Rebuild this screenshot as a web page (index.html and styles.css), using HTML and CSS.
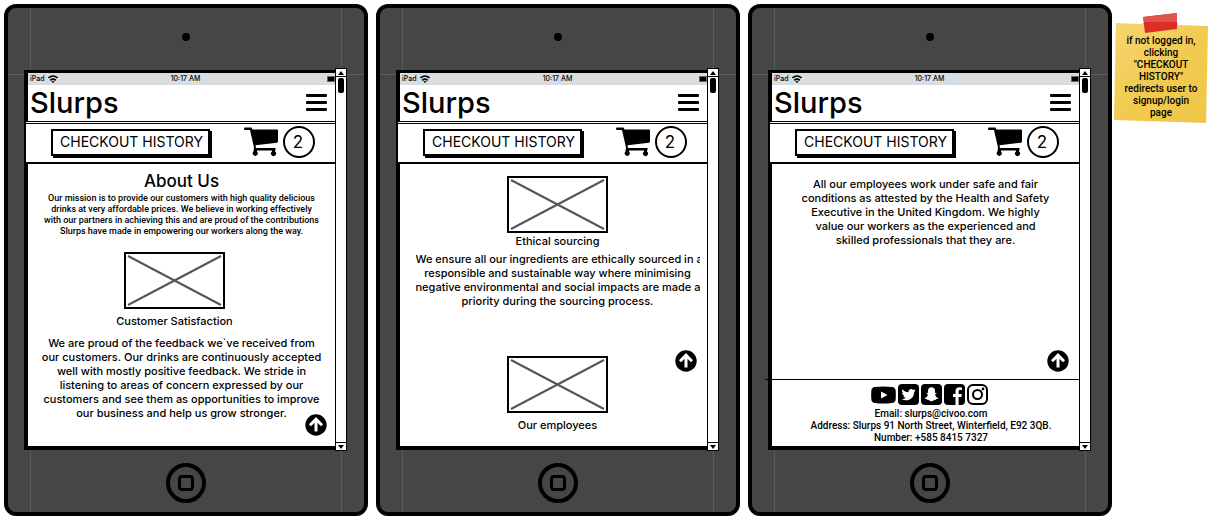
FILE: index.html
```html
<!DOCTYPE html>
<html lang="en">
<head>
<meta charset="utf-8">
<meta name="viewport" content="width=device-width, initial-scale=1">
<title>Slurps – About Us</title>
<link rel="stylesheet" href="styles.css">
</head>
<body>
<svg class="defs" aria-hidden="true">
  <symbol id="wifi" viewBox="0 0 10 8"><g fill="none" stroke="#000" stroke-width="1.6"><path d="M.5 3Q5-1 9.500 3"/><path d="M2.200 5.300Q5 2.900 7.800 5.300"/></g><path d="M3.400 6.600Q5 5.400 6.600 6.600L5 8Z"/></symbol>
  <symbol id="battery" viewBox="0 0 8 6"><rect width="8" height="6" fill="#666"/><rect x="1" y="1" width="6" height="4"/></symbol>
  <symbol id="cart" viewBox="0 0 35 30"><path d="M0 1.500Q0 .5 1 .5H7.500L8.500 2.500H33Q34 2.500 34 3.500V14.500Q34 15.500 33 15.700L11.500 18.300L12 21H31.500V23.500H31V24.500A2.500 2.500 0 1 1 28 24.500V23.500H13V24.500A2.500 2.500 0 1 1 9.500 24.500L10 20.500L6 3H1Q0 3 0 1.500Z"/></symbol>
  <symbol id="up" viewBox="0 0 22 22"><circle cx="11" cy="11" r="10.700"/><path d="M11 17.500V5.500M5 11.200L11 5.200L17 11.200" fill="none" stroke="#fff" stroke-width="3"/></symbol>
  <symbol id="cross" viewBox="0 0 101 57"><rect x="1" y="1" width="99" height="55" fill="#fff" stroke="#000" stroke-width="2"/><path d="M4 4L97 53M97 4L4 53" stroke="#555" stroke-width="2"/></symbol>
  <symbol id="youtube" viewBox="0 0 25 18"><path d="M4 1Q12.500 0 21 1Q24.500 1.300 24.700 5Q25 9 24.700 13Q24.500 16.700 21 17Q12.500 18 4 17Q.5 16.700.3 13Q0 9 .3 5Q.5 1.300 4 1Z"/><path d="M10 5.500L16.500 9L10 12.500Z" fill="#fff"/></symbol>
  <symbol id="twitter" viewBox="0 0 21 21"><rect width="21" height="21" rx="4"/><path d="M17.500 6.300C17 6.600 16.500 6.700 16 6.800C16.600 6.400 17 5.900 17.200 5.200C16.600 5.500 16 5.800 15.300 5.900C13.400 3.900 10 5.300 10.600 8.300C8.100 8.200 5.900 7 4.500 5.200C3.700 6.600 4.100 8.300 5.400 9.200C4.900 9.200 4.500 9 4.100 8.800C4.100 10.200 5.100 11.500 6.500 11.800C6.100 11.900 5.600 11.900 5.200 11.800C5.600 13 6.700 13.800 7.900 13.800C6.700 14.800 5.100 15.200 3.600 15C9 18.400 16.200 15 16.200 8C16.700 7.500 17.200 7 17.500 6.300Z" fill="#fff"/></symbol>
  <symbol id="snapchat" viewBox="0 0 21 21"><rect width="21" height="21" rx="4"/><path d="M10.500 3.300C12.700 3.300 14.100 5 14 7L13.900 8.900C14.400 9.200 15.200 8.500 15.500 9C15.700 9.600 14.500 9.900 14.200 10.400C14.300 12 15.500 13.300 17.300 13.900C17.400 14.700 16 14.800 15.300 15L15 15.900C13 15.400 12.700 17.300 10.500 17.300C8.300 17.300 8 15.400 6 15.900L5.700 15C5 14.800 3.600 14.700 3.700 13.900C5.500 13.300 6.700 12 6.800 10.400C6.500 9.900 5.300 9.600 5.500 9C5.800 8.500 6.600 9.200 7.100 8.900L7 7C6.900 5 8.300 3.300 10.500 3.300Z" fill="#fff"/></symbol>
  <symbol id="facebook" viewBox="0 0 21 21"><rect width="21" height="21" rx="4"/><path d="M11.500 21V13H9V10H11.500V7.500C11.500 4.700 13 3.300 15.500 3.300L18 3.500V6.100H16.300C15 6.100 14.600 6.800 14.600 7.800V10H17.800L17.300 13H14.600V21Z" fill="#fff"/></symbol>
  <symbol id="instagram" viewBox="0 0 21 21"><g fill="none" stroke="#000" stroke-width="2"><rect x="1" y="1" width="19" height="19" rx="5"/><circle cx="10.500" cy="10.500" r="4.500"/></g><circle cx="16" cy="5" r="1.400"/></symbol>
</svg>

<main class="board">
  <section class="tablet">
    <div class="bezel"><span class="camera"></span></div>
    <div class="display">
      <div class="screen">
        <div class="status"><span class="carrier">iPad <svg class="wifi"><use href="#wifi"/></svg></span><span class="time">10:17 AM</span><svg class="battery"><use href="#battery"/></svg></div>
        <header class="header"><h1 class="brand">Slurps</h1><button class="menu" aria-label="Menu"><span></span><span></span><span></span></button></header>
        <div class="toolbar"><button class="history">CHECKOUT HISTORY</button><svg class="cart"><use href="#cart"/></svg><span class="count">2</span></div>
        <div class="content">
          <h2 class="heading">About Us</h2>
          <p class="copy copy-small">Our mission is to provide our customers with high quality delicious<br>drinks at very affordable prices. We believe in working effectively<br>with our partners in achieving this and are proud of the contributions<br>Slurps have made in empowering our workers along the way.</p>
          <figure class="figure figure-satisfaction"><svg class="placeholder"><use href="#cross"/></svg><figcaption class="caption caption-spaced">Customer Satisfaction</figcaption></figure>
          <p class="copy copy-feedback">We are proud of the feedback we`ve received from<br>our customers. Our drinks are continuously accepted<br>well with mostly positive feedback. We stride in<br>listening to areas of concern expressed by our<br>customers and see them as opportunities to improve<br>our business and help us grow stronger.</p>
          <button class="top top-low" aria-label="Back to top"><svg><use href="#up"/></svg></button>
        </div>
      </div>
      <div class="scrollbar"><span class="arrow arrow-up"></span><span class="thumb"></span><span class="arrow arrow-down"></span></div>
    </div>
    <div class="bezel"><button class="home" aria-label="Home"><span></span></button></div>
  </section>

  <section class="tablet">
    <div class="bezel"><span class="camera"></span></div>
    <div class="display">
      <div class="screen">
        <div class="status"><span class="carrier">iPad <svg class="wifi"><use href="#wifi"/></svg></span><span class="time">10:17 AM</span><svg class="battery"><use href="#battery"/></svg></div>
        <header class="header"><h1 class="brand">Slurps</h1><button class="menu" aria-label="Menu"><span></span><span></span><span></span></button></header>
        <div class="toolbar"><button class="history">CHECKOUT HISTORY</button><svg class="cart"><use href="#cart"/></svg><span class="count">2</span></div>
        <div class="content content-sourcing">
          <figure class="figure"><svg class="placeholder"><use href="#cross"/></svg><figcaption class="caption">Ethical sourcing</figcaption></figure>
          <p class="copy copy-sourcing">We ensure all our ingredients are ethically sourced in a<br>responsible and sustainable way where minimising<br>negative environmental and social impacts are made a<br>priority during the sourcing process.</p>
          <figure class="figure figure-employees"><svg class="placeholder"><use href="#cross"/></svg><figcaption class="caption caption-spaced">Our employees</figcaption></figure>
          <button class="top" aria-label="Back to top"><svg><use href="#up"/></svg></button>
        </div>
      </div>
      <div class="scrollbar"><span class="arrow arrow-up"></span><span class="thumb"></span><span class="arrow arrow-down"></span></div>
    </div>
    <div class="bezel"><button class="home" aria-label="Home"><span></span></button></div>
  </section>

  <section class="tablet">
    <div class="bezel"><span class="camera"></span></div>
    <div class="display">
      <div class="screen">
        <div class="status"><span class="carrier">iPad <svg class="wifi"><use href="#wifi"/></svg></span><span class="time">10:17 AM</span><svg class="battery"><use href="#battery"/></svg></div>
        <header class="header"><h1 class="brand">Slurps</h1><button class="menu" aria-label="Menu"><span></span><span></span><span></span></button></header>
        <div class="toolbar"><button class="history">CHECKOUT HISTORY</button><svg class="cart"><use href="#cart"/></svg><span class="count">2</span></div>
        <div class="content content-employees">
          <p class="copy">All our employees work under safe and fair<br>conditions as attested by the Health and Safety<br>Executive in the United Kingdom. We highly<br>value our workers as the experienced and<br>skilled professionals that they are.</p>
          <button class="top" aria-label="Back to top"><svg><use href="#up"/></svg></button>
          <footer class="footer">
            <nav class="social">
              <a href="#youtube" aria-label="YouTube"><svg class="wide"><use href="#youtube"/></svg></a>
              <a href="#twitter" aria-label="Twitter"><svg><use href="#twitter"/></svg></a>
              <a href="#snapchat" aria-label="Snapchat"><svg><use href="#snapchat"/></svg></a>
              <a href="#facebook" aria-label="Facebook"><svg><use href="#facebook"/></svg></a>
              <a href="#instagram" aria-label="Instagram"><svg><use href="#instagram"/></svg></a>
            </nav>
            <address class="contact">Email: slurps@civoo.com<br>Address: Slurps 91 North Street, Winterfield, E92 3QB.<br>Number: +585 8415 7327</address>
          </footer>
        </div>
      </div>
      <div class="scrollbar"><span class="arrow arrow-up"></span><span class="thumb"></span><span class="arrow arrow-down"></span></div>
    </div>
    <div class="bezel"><button class="home" aria-label="Home"><span></span></button></div>
  </section>

  <aside class="note">
    <svg class="tape" viewBox="0 0 34 20"><path d="M0 4L34 0V16L2 20Z" fill="#db2e26"/><path d="M0 4L34 0V9H1Z" fill="#e0544d"/></svg>
    <p class="note-text">if not logged in,<br>clicking<br>"CHECKOUT<br>HISTORY"<br>redirects user to<br>signup/login<br>page</p>
  </aside>
</main>
</body>
</html>
```
FILE: styles.css
```css
* { box-sizing: border-box; }
body { margin: 0; background: #fff; color: #000; font-family: Inter, "Noto Sans", sans-serif; font-weight: 500; }
h1, h2, p, figure { margin: 0; font-weight: 500; }
button { padding: 0; font: inherit; color: inherit; background: none; border: 0; }
svg { display: block; }
.defs { position: absolute; width: 0; height: 0; }

.board { display: grid; grid-template-columns: repeat(3, minmax(0, 364fr)) minmax(0, 92fr); column-gap: 8px; min-height: 100vh; padding: 4px 0 6px 4px; }

.tablet {
  display: grid; grid-template-rows: 62px 1fr 62px; border: 4px solid #000; border-radius: 12px;
  background-color: #464646;
  background-image: linear-gradient(#5c5c5c, #5c5c5c), linear-gradient(#5c5c5c, #5c5c5c), linear-gradient(#5c5c5c, #5c5c5c);
  background-size: 1px 100%, 1px 100%, 100% 1px;
  background-position: 22px 0, right 22px top 0, 0 66px;
  background-repeat: no-repeat;
}
.bezel { display: flex; align-items: center; justify-content: center; }
.camera { width: 8px; height: 8px; border-radius: 50%; background: #000; margin-bottom: 4px; }
.home { display: flex; align-items: center; justify-content: center; width: 40px; height: 40px; margin-top: 4px; border: 4px solid #000; border-radius: 50%; }
.home span { width: 16px; height: 16px; border: 3px solid #000; border-radius: 4px; }

.display { display: flex; padding: 0 17px 0 16px; }
.screen { display: flex; flex-direction: column; flex: 1; min-width: 0; background: #fff; border: 4px solid #000; border-width: 3px 0 4px 4px; }

.scrollbar { display: flex; flex-direction: column; width: 12px; margin: -2px 0 -1px; border: 1px solid #000; background: #fff; align-items: center; }
.arrow { display: flex; justify-content: center; align-items: center; align-self: stretch; height: 8px; }
.arrow-up { border-bottom: 1px solid #000; }
.arrow-down { border-top: 1px solid #000; margin-top: auto; }
.arrow::before { content: ""; border: 3px solid transparent; }
.arrow-up::before { border-top: 0; border-bottom: 4px solid #000; }
.arrow-down::before { border-bottom: 0; border-top: 4px solid #000; }
.thumb { width: 6px; height: 15px; margin-top: 1px; border-radius: 2px; background: #000; }

.status { display: grid; grid-template-columns: 1fr auto 1fr; align-items: center; height: 12px; padding-left: 2px; background: #d7dde1; font-size: 7px; line-height: 12px; }
.carrier { display: flex; align-items: center; gap: 3px; }
.wifi { width: 10px; height: 8px; }
.time { padding-left: 6px; }
.battery { width: 8px; height: 6px; justify-self: end; }

.header { display: flex; align-items: center; justify-content: space-between; height: 36px; padding: 0 8px 0 2px; }
.brand { font-size: 29px; line-height: 36px; }
.menu { display: grid; gap: 4px; width: 21px; padding-bottom: 2px; }
.menu span { height: 3px; border-radius: 1px; background: #000; }

.toolbar { display: flex; align-items: center; height: 43px; margin-left: -3px; padding: 0 20px 2px 25px; border: 1px solid #000; border-width: 3px 0 2px 1px; border-top-style: double; background: #fff; }
.history { flex: 1; min-width: 0; height: 27px; padding: 0 0 2px 2px; border: 2px solid #000; box-shadow: 2px 2px 0 #000; font-size: 14px; font-weight: 400; white-space: nowrap; }
.cart { width: 35px; height: 30px; margin-left: 34px; }
.count { display: grid; place-items: center; width: 32px; height: 32px; margin-left: 4px; padding-right: 2px; border: 2px solid #000; border-radius: 50%; font-size: 17px; font-weight: 400; }

.content { position: relative; flex: 1; display: flex; flex-direction: column; align-items: center; padding-top: 5px; }
.heading { font-size: 17px; line-height: 24px; }
.copy { overflow: hidden; font-size: 11px; line-height: 14px; text-align: center; white-space: nowrap; }
.copy-small { width: 283px; font-family: Roboto, "Noto Sans", sans-serif; font-size: 9px; line-height: 11px; }
.copy-feedback { margin-top: 7px; }
.figure { display: flex; flex-direction: column; align-items: center; }
.figure-satisfaction { margin: 15px 14px 0 0; }
.placeholder { width: 101px; height: 57px; }
.caption { font-size: 11px; line-height: 16px; }
.caption-spaced { margin-top: 4px; }
.content-sourcing { padding: 12px 0 0 8px; }
.copy-sourcing { width: 284px; margin-top: 3px; }
.figure-employees { margin-top: 48px; }
.top { position: absolute; right: 10px; bottom: 74px; width: 22px; height: 22px; }
.top svg { width: 22px; height: 22px; }
.top-low { right: 8px; bottom: 10px; }

.content-employees { padding-top: 13px; }
.footer { align-self: stretch; margin: auto 0 0 -7px; padding: 4px 0 2px 18px; border-top: 1px solid #000; }
.social { display: flex; align-items: center; justify-content: center; gap: 2px; margin-right: 4px; }
.social svg { width: 21px; height: 21px; }
.social .wide { width: 25px; height: 18px; }
.contact { margin-top: 3px; font-family: Roboto, "Noto Sans", sans-serif; font-size: 10px; line-height: 12px; font-style: normal; text-align: center; white-space: nowrap; }

.note { position: relative; align-self: start; width: 94px; margin: 19px 0 0 -6px; padding: 12px 0 4px; background: linear-gradient(135deg, #f5d56f, #f1ca4e 55%, #efc748); clip-path: polygon(2% 0, 30% 1px, 30% -12px, 68% -12px, 68% 2px, 100% 3px, 98% 100%, 0 97%); }
.tape { position: absolute; left: 29px; top: -10px; width: 34px; height: 20px; }
.note-text { font-family: Roboto, "Noto Sans", sans-serif; font-size: 10px; line-height: 12px; text-align: center; white-space: nowrap; }
```
